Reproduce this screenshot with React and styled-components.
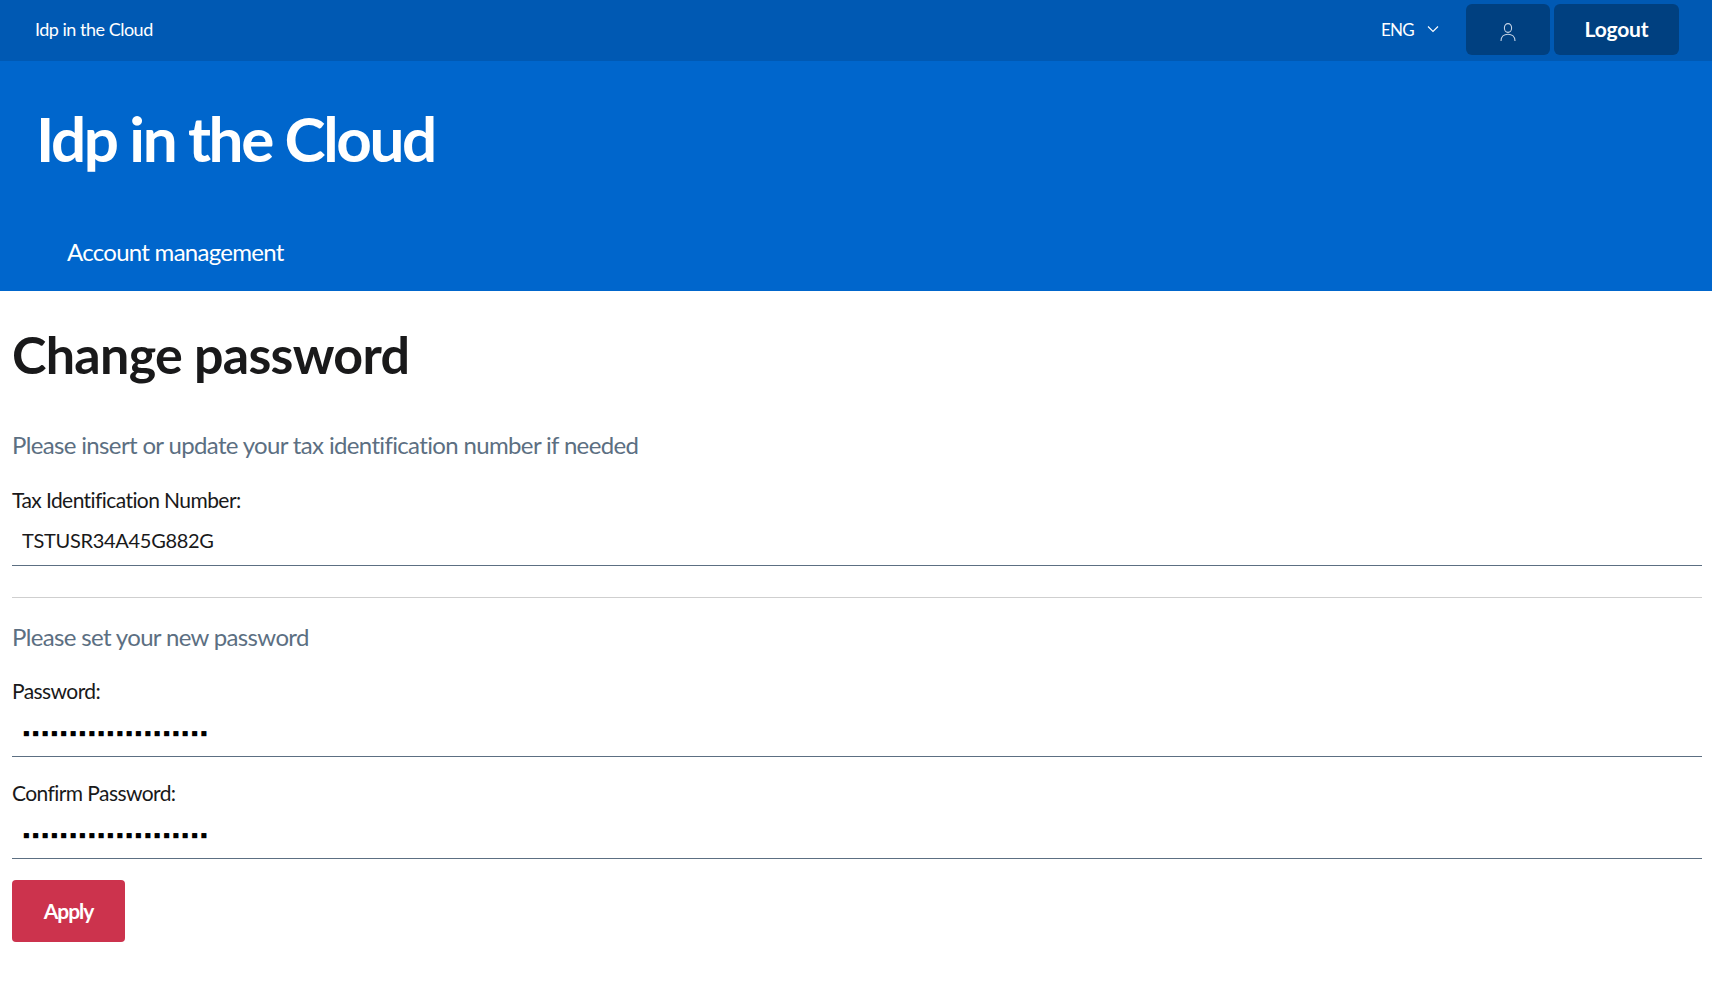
import React from "react";
import styled, { createGlobalStyle } from "styled-components";

const Global = createGlobalStyle`
  html, body { margin: 0; padding: 0; background: #fff; }
  body { font-family: "Lato", "Open Sans", sans-serif; color: #19191a; }
`;

const SlimBar = styled.div`
  height: 61px; box-sizing: border-box; background: #0059b3; color: #fff;
  display: flex; align-items: center; justify-content: space-between;
  padding: 0 33px 2px 35px;
`;
const SlimTitle = styled.span`font-size: 18px; letter-spacing: -0.5px; line-height: 60px; padding-bottom: 2px;`;
const SlimActions = styled.div`display: flex; align-items: center; gap: 4px;`;
const Lang = styled.div`
  display: flex; align-items: center; gap: 13px; font-size: 17px; letter-spacing: -0.7px; margin-right: 23px; padding-bottom: 1px;
`;
const DarkButton = styled.button`
  height: 51px; width: ${p => p.$w}px; border: 0; border-radius: 6px; background: #004080; color: #fff;
  font-family: inherit; font-weight: 700; font-size: 21px; letter-spacing: -0.2px; padding: 0 0 2px;
  display: flex; align-items: center; justify-content: center;
`;
const Hero = styled.header`
  background: #0066cc; height: 230px; box-sizing: border-box; color: #fff;
  padding: 39px 0 0 36px; display: flex; flex-direction: column;
`;
const Brand = styled.div`
  font-size: 62px; font-weight: 700; line-height: 76px; letter-spacing: -2.4px;
`;
const NavItem = styled.a`
  font-size: 24px; line-height: 36px; margin: 58px 0 0 31px; color: #fff; letter-spacing: -0.72px;
`;
const Main = styled.main`padding: 29px 10px 0 12px;`;
const Title = styled.h1`
  margin: 0; font-size: 52px; font-weight: 700; line-height: 68px; letter-spacing: -0.7px; color: #19191a;
`;
const Lead = styled.p`
  margin: ${p => p.$top}px 0 0; font-size: 24px; line-height: 36px; color: #5c6f82; letter-spacing: -0.65px;
`;
const Label = styled.label`
  display: block; margin-top: ${p => p.$top}px; font-size: 21px; line-height: 32px; color: #19191a; letter-spacing: -0.58px;
`;
const Input = styled.input`
  display: block; width: 100%; box-sizing: border-box; height: 50px; border: 0;
  border-bottom: 1px solid #5c6f82; outline: none; padding: 0 10px 2px; font-family: inherit;
  font-size: 20px; color: #19191a; background: #fff; letter-spacing: -0.3px;
`;
const SecretInput = styled(Input)`
  color: #000; font-size: 10.5px; letter-spacing: 3px; padding: 3px 10px 0 11px; -webkit-text-security: square;
`;
const Divider = styled.hr`margin: 31px 0 0; border: 0; border-top: 1px solid #cfcfcf;`;
const Apply = styled.button`
  display: block; margin-top: 21px; width: 113px; height: 62px; border: 0; border-radius: 4px;
  background: #cc334d; color: #fff; font-family: inherit; font-weight: 700; font-size: 21px; letter-spacing: -1px; padding: 0 0 2px;
`;
const IconSlot = styled.span`display: flex; margin-top: 7px;`;

const UserIcon = () => (
  <IconSlot>
    <svg width="16" height="19" viewBox="0 0 16 19" fill="none" stroke="#c5d4e6" strokeWidth="1.1">
      <ellipse cx="8" cy="5" rx="3.6" ry="4.4" />
      <path d="M1 18c0-4.2 3-6.8 7-6.8s7 2.6 7 6.8" />
    </svg>
  </IconSlot>
);
const Chevron = () => (
  <svg width="12" height="8" viewBox="0 0 12 8" fill="none" stroke="#fff" strokeWidth="1.1">
    <path d="M1 1.5l5 5 5-5" />
  </svg>
);

export default function App() {
  return (
    <>
      <Global />
      <SlimBar>
        <SlimTitle>Idp in the Cloud</SlimTitle>
        <SlimActions>
          <Lang>ENG <Chevron /></Lang>
          <DarkButton $w={84}><UserIcon /></DarkButton>
          <DarkButton $w={125}>Logout</DarkButton>
        </SlimActions>
      </SlimBar>
      <Hero>
        <Brand>Idp in the Cloud</Brand>
        <NavItem>Account management</NavItem>
      </Hero>
      <Main>
        <Title>Change password</Title>
        <Lead $top={39}>Please insert or update your tax identification number if needed</Lead>
        <Label $top={21}>Tax Identification Number:</Label>
        <Input defaultValue="TSTUSR34A45G882G" />
        <Divider />
        <Lead $top={21}>Please set your new password</Lead>
        <Label $top={20}>Password:</Label>
        <SecretInput type="text" defaultValue="xxxxxxxxxxxxxxxxxxxx" />
        <Label $top={20}>Confirm Password:</Label>
        <SecretInput type="text" defaultValue="xxxxxxxxxxxxxxxxxxxx" />
        <Apply>Apply</Apply>
      </Main>
    </>
  );
}
